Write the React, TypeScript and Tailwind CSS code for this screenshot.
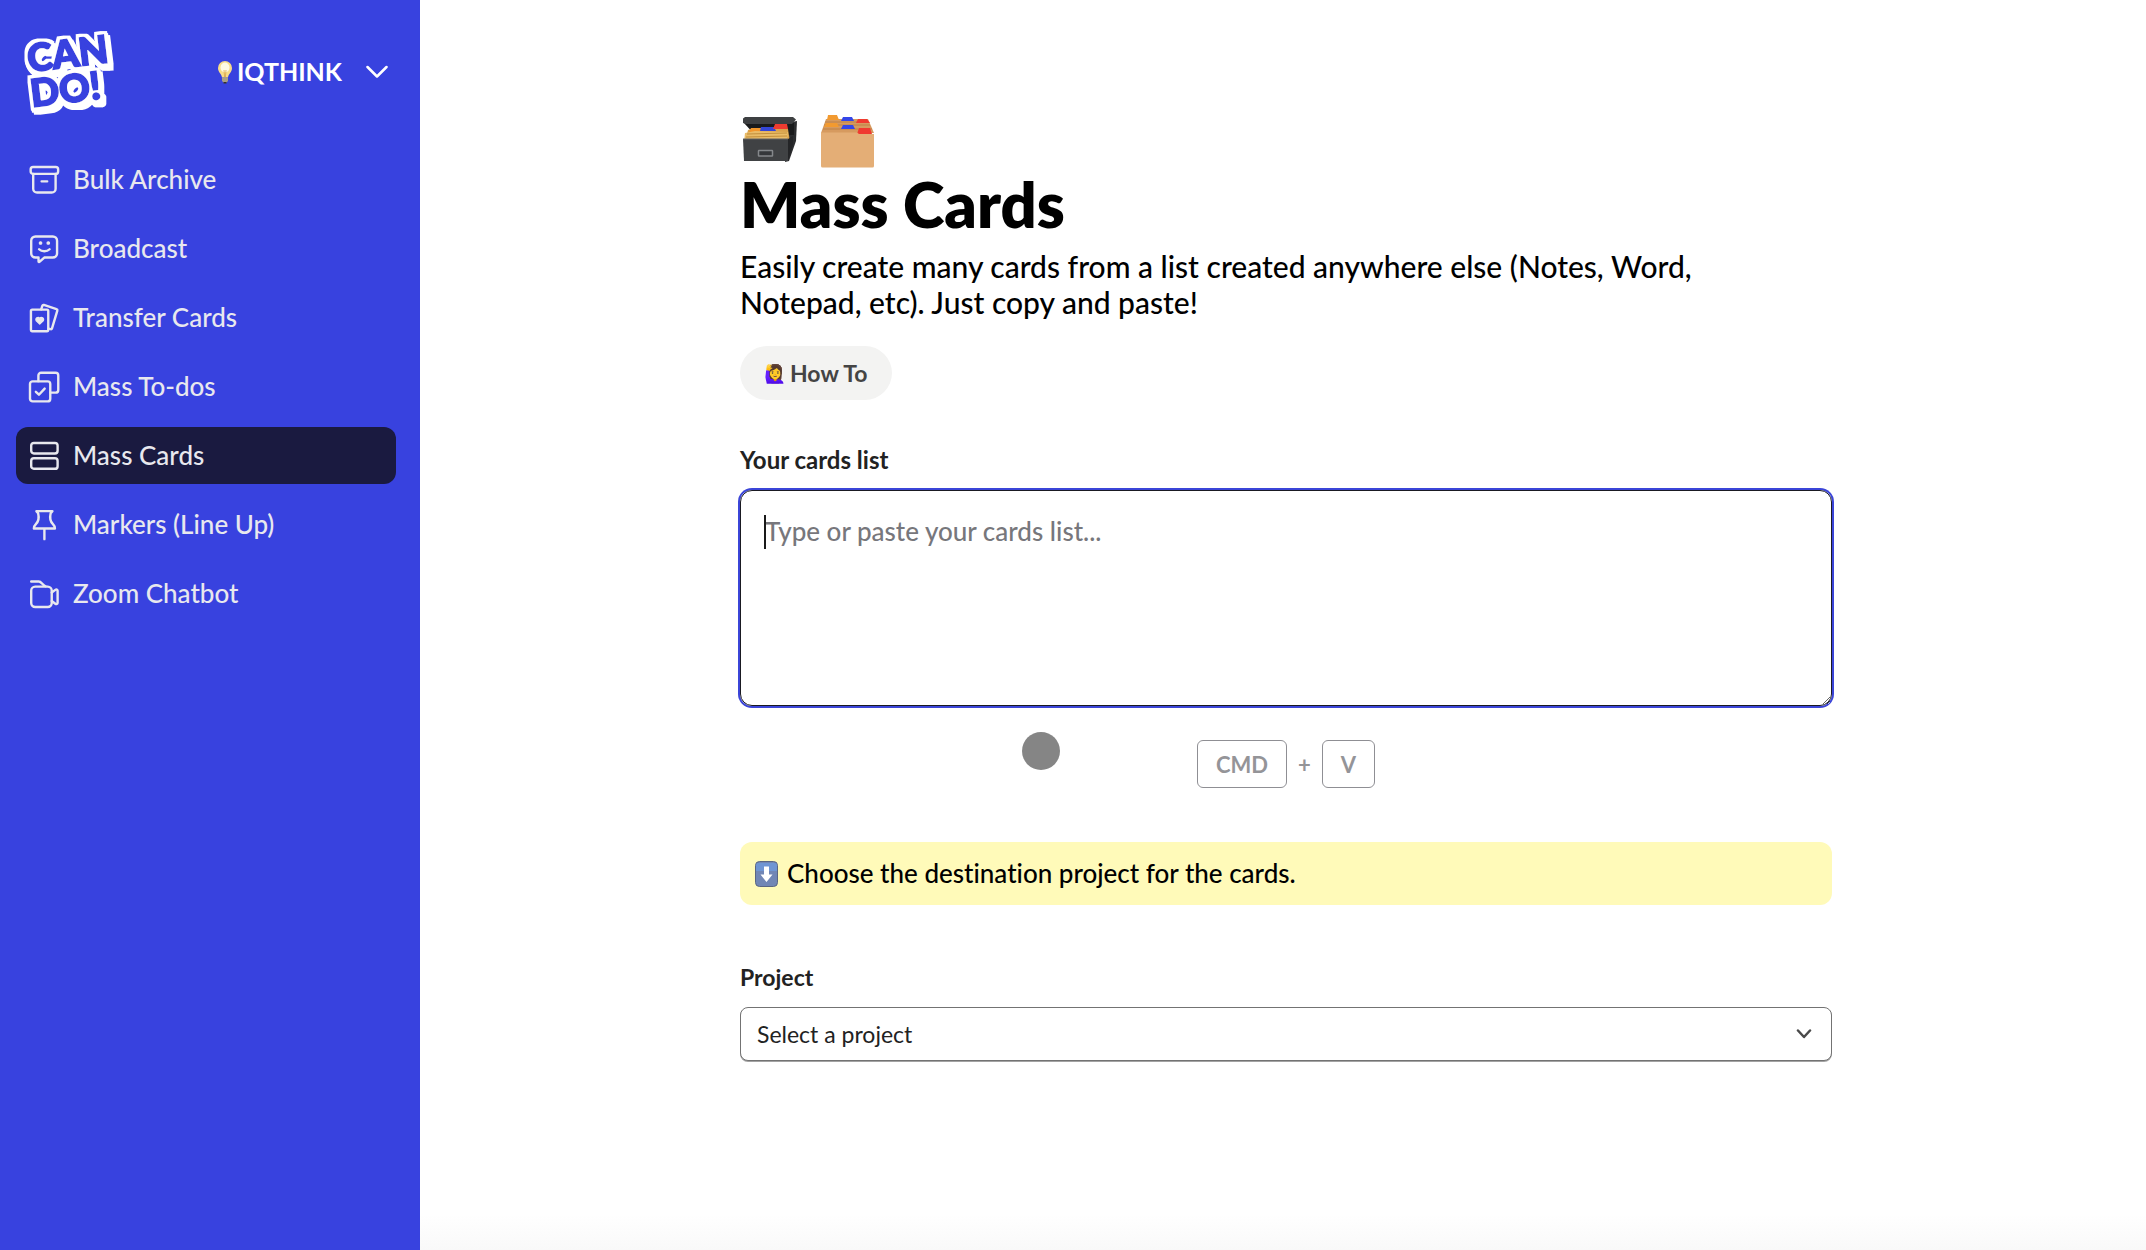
import type { ReactNode } from "react"
import clsx from "clsx"

type NavItem = {
    label: string
    icon: ReactNode
    active?: boolean
}

const navItems: NavItem[] = [
    {
        label: "Bulk Archive",
        icon: (
            <>
                <rect x="2" y="2.2" width="20.6" height="5.2" rx="1.8" />
                <path d="M3.9 7.4v11.1a2.9 2.9 0 0 0 2.9 2.9h11a2.9 2.9 0 0 0 2.9-2.9V7.4M10.2 13h4.2" />
            </>
        )
    },
    {
        label: "Broadcast",
        icon: (
            <>
                <path d="M5.6 2.6h13a3.2 3.2 0 0 1 3.2 3.2v9.4a3.2 3.2 0 0 1-3.2 3.2h-6.4l-3.4 3.1c-.5.4-.9.2-.9-.4v-2.7H5.6a3.2 3.2 0 0 1-3.2-3.2V5.8a3.2 3.2 0 0 1 3.2-3.2z" />
                <path d="M8.3 12.2c2 2 5.9 2 7.9 0" />
                <circle cx="9.4" cy="7.5" r="1" fill="currentColor" strokeWidth="0.8" />
                <circle cx="15.2" cy="7.5" r="1" fill="currentColor" strokeWidth="0.8" />
            </>
        )
    },
    {
        label: "Transfer Cards",
        icon: (
            <>
                <rect x="2.2" y="5.7" width="13" height="16.2" rx="1" />
                <path d="M9.9 5.5l.9-2.7a.9.9 0 0 1 1.1-.6l9.5 3.2a.9.9 0 0 1 .6 1.1l-4 13.3a.9.9 0 0 1-1.1.6l-1.5-.4" />
                <path
                    d="M8.8 16.6l-2.6-2.5a1.5 1.5 0 0 1 2.6-1.8 1.5 1.5 0 0 1 2.6 1.8z"
                    fill="currentColor"
                    strokeWidth="1"
                />
            </>
        )
    },
    {
        label: "Mass To-dos",
        icon: (
            <>
                <rect x="1.5" y="7.8" width="15.2" height="15" rx="2" />
                <path d="M7.8 7.6V3.3a2 2 0 0 1 2-2h10.9a2 2 0 0 1 2 2v10.9a2 2 0 0 1-2 2h-3.8" />
                <path d="M5.9 15.6l2.3 2.2 4.3-4.6" />
            </>
        )
    },
    {
        label: "Mass Cards",
        active: true,
        icon: (
            <>
                <rect x="2.4" y="2.2" width="19.8" height="7.9" rx="2" />
                <rect x="2.4" y="13.7" width="19.8" height="7.9" rx="2" />
            </>
        )
    },
    {
        label: "Markers (Line Up)",
        icon: (
            <path d="M6.3 1.6h12l-1.3 1.6c-.8 3.3-.3 6.2 1.7 8.2 1 1 1.5 2 1.5 3.2H4.400c0-1.200.5-2.200 1.500-3.200 2-2 2.500-4.900 1.700-8.200zM12.300 14.600v8" />
        )
    },
    {
        label: "Zoom Chatbot",
        icon: (
            <>
                <rect x="2.4" y="6.5" width="15.4" height="15.3" rx="3" />
                <path d="M2.4 2.6h5.7c1.9 0 2.6 2.6 5 3.6M17.8 10.9l2.7-2c.8-.6 1.7-.2 1.7.7v9c0 .9-.9 1.3-1.7.7l-2.7-2" />
            </>
        )
    }
]

function Logo() {
    return (
        <a href="#" aria-label="Can Do!">
            <svg width="108" height="96" viewBox="0 0 108 96" className="overflow-visible">
                <defs>
                    <filter id="sticker" x="-20%" y="-20%" width="140%" height="140%">
                        <feMorphology in="SourceAlpha" operator="dilate" radius="2.5" result="near" />
                        <feOffset in="near" dx="1" dy="2" result="mid" />
                        <feOffset in="near" dx="3" dy="4" result="far" />
                        <feMerge result="shape">
                            <feMergeNode in="near" />
                            <feMergeNode in="mid" />
                            <feMergeNode in="far" />
                        </feMerge>
                        <feFlood floodColor="#fff" />
                        <feComposite in2="shape" operator="in" result="outline" />
                        <feMerge>
                            <feMergeNode in="outline" />
                            <feMergeNode in="SourceGraphic" />
                        </feMerge>
                    </filter>
                </defs>
                <g
                    filter="url(#sticker)"
                    className="fill-[#3842df] stroke-[#3842df] font-['Lato',sans-serif] font-black"
                    strokeWidth="2"
                    fontSize="38"
                >
                    <text transform="translate(13 48) rotate(-7)">CAN</text>
                    <text transform="translate(16 83) rotate(-7)">DO!</text>
                </g>
            </svg>
        </a>
    )
}

function BulbIcon() {
    return (
        <svg width="16" height="24" viewBox="0 0 16 24" aria-hidden>
            <path d="M8 1a7 7 0 0 0-7 7c0 4.500 3.600 5.500 4 9.500h6c.4-4 4-5 4-9.500a7 7 0 0 0-7-7z" fill="#f7dc8a" />
            <ellipse cx="8" cy="7.5" rx="4.5" ry="5" fill="#fffbe6" />
            <path d="M7 10l.6 7h.8l.6-7" fill="none" stroke="#d9a646" strokeWidth="0.8" />
            <path d="M5 17.5h6v3.5l-2 2H7l-2-2z" fill="#a89f86" />
            <path d="M6.5 22h3v1.5h-3z" fill="#33312b" />
        </svg>
    )
}

function CardBoxIcon() {
    return (
        <svg width="58" height="52" viewBox="0 0 58 52" aria-hidden>
            <path d="M46 8l10-2-1 20-7 20-4 1z" fill="#2b2c2e" />
            <path d="M3 8h50v12H14z" fill="#191a1b" />
            <path d="M7 15l6-2 34 1 2 13H4z" fill="#d9a34d" />
            <path d="M10 13h10l2 4H8z" fill="#f2962b" />
            <path d="M20 12h13l2 4H19z" fill="#3446d6" />
            <path d="M34 9h12l1 5H32z" fill="#ee3b30" />
            <path d="M4 18l10-2 33 1-1 10H3z" fill="#e9bc68" />
            <path d="M5 22l41-1M6 19l40-1" stroke="#b98330" strokeWidth="0.8" />
            <path d="M2 3.5L4 2h48l3 2.5-4 4.500H5l-3-1z" fill="#3e4042" />
            <path d="M2 24h45v22H3z" fill="#404244" />
            <path d="M47 24l5-3v8l-5 17z" fill="#242527" />
            <path d="M2 24h45" stroke="#606264" />
            <rect x="17.5" y="35.5" width="14" height="5.5" rx="0.5" fill="#35373a" stroke="#85888b" strokeWidth="1.5" />
        </svg>
    )
}

function FolderBoxIcon() {
    return (
        <svg width="58" height="54" viewBox="0 0 58 54" aria-hidden>
            <path d="M2 18L7 4h42l6 14z" fill="#d69a5f" />
            <path d="M6 7h43M5 10h46M4 14h49" stroke="#b97b40" strokeWidth="0.8" />
            <path d="M9 0h9l2 5H8z" fill="#f29a30" />
            <path d="M24 2h9l2 4H22z" fill="#3446e8" />
            <path d="M39 4h9l3 4H37z" fill="#f03a30" />
            <path d="M7 8h11l2 4H5z" fill="#f29a30" />
            <path d="M24 10h10l2 4H22z" fill="#3446e8" />
            <path d="M40 13h11l2 6H38z" fill="#f03a30" />
            <path d="M2 17.5h36l2 1.5h15v32a1.5 1.5 0 0 1-1.500 1.500h-50A1.500 1.500 0 0 1 2 51z" fill="#e4ae76" />
        </svg>
    )
}

function ArrowDownBadge() {
    return (
        <svg width="25" height="26" viewBox="0 0 25 26" aria-hidden>
            <rect x="1.5" y="0.5" width="22" height="25" rx="4" fill="#7186b5" stroke="#5a6683" />
            <path d="M4 2h17a2 2 0 0 1 2 2v6H2V4a2 2 0 0 1 2-2z" fill="#6f9be0" opacity="0.7" />
            <path d="M10 5.5h5v8h3.5l-6 7.500-6-7.500H10z" fill="#fff" />
        </svg>
    )
}

function Sidebar() {
    return (
        <aside className="w-[420px] shrink-0 bg-[#3842df] text-[#e8e8ee]">
            <div className="flex h-36 items-center justify-between pl-4 pr-8">
                <Logo />
                <button type="button" className="flex items-center gap-6 text-white">
                    <span className="flex items-center gap-1 text-[25px] font-bold">
                        <BulbIcon />
                        IQTHINK
                    </span>
                    <svg
                        width="22"
                        height="14"
                        viewBox="0 0 22 14"
                        fill="none"
                        stroke="currentColor"
                        strokeWidth="2.5"
                        strokeLinecap="round"
                        strokeLinejoin="round"
                        aria-hidden
                    >
                        <path d="M1.5 2l9.5 9.5L20.5 2" />
                    </svg>
                </button>
            </div>
            <nav className="flex flex-col gap-3 pt-[7px] pr-6 pl-4">
                {navItems.map((item) => (
                    <a
                        key={item.label}
                        href="#"
                        aria-current={item.active ? "page" : undefined}
                        className={clsx(
                            "flex h-[57px] items-center gap-[13px] rounded-xl px-3 text-[26px] font-medium",
                            item.active && "bg-[#1a1a40]"
                        )}
                    >
                        <svg
                            width="32"
                            height="32"
                            viewBox="0 0 24 24"
                            fill="none"
                            stroke="currentColor"
                            strokeWidth="1.8"
                            strokeLinecap="round"
                            strokeLinejoin="round"
                            aria-hidden
                        >
                            {item.icon}
                        </svg>
                        {item.label}
                    </a>
                ))}
            </nav>
        </aside>
    )
}

function Key({ children }: { children: ReactNode }) {
    return (
        <kbd className="flex h-12 items-center rounded-md border border-[#8f8f94] px-[18px] font-['Lato',sans-serif]">
            {children}
        </kbd>
    )
}

export default function App() {
    return (
        <div className="flex min-h-screen bg-white font-['Lato','Noto_Sans',sans-serif] text-black [font-variant-ligatures:no-common-ligatures]">
            <Sidebar />
            <main className="flex min-w-0 flex-1 flex-col">
                <div className="mx-auto w-full max-w-[1098px] pt-28 pl-1.5">
                    <div className="flex h-[60px] items-start gap-5 pt-[3px] pl-px">
                        <CardBoxIcon />
                        <FolderBoxIcon />
                    </div>
                    <h1 className="text-[63px] leading-[64px] font-extrabold">Mass Cards</h1>
                    <p className="mt-3 max-w-[990px] text-[30px] leading-9 font-medium">
                        Easily create many cards from a list created anywhere else (Notes, Word, Notepad, etc). Just
                        copy and paste!
                    </p>
                    <button
                        type="button"
                        className="mt-[26px] flex h-[54px] items-center gap-1 rounded-full bg-[#f3f3f2] px-6 text-[23px] font-bold text-[#444]"
                    >
                        <span className="text-[18px]">🙋‍♀️</span>
                        How To
                    </button>

                    <label htmlFor="cards" className="mt-11 block text-[24px] leading-8 font-bold text-[#222]">
                        Your cards list
                    </label>
                    <div className="relative mt-3.5 flex">
                        <textarea
                            id="cards"
                            placeholder="Type or paste your cards list..."
                            className="h-[216px] w-full rounded-xl border border-[#1a1a22] px-6 py-6 text-[26px] leading-8 font-medium ring-2 ring-[#3b45d8] outline-none placeholder:text-[#77777c]"
                        />
                        <span className="absolute top-[25px] left-6 h-[34px] w-0.5 bg-[#1a1a1a]" />
                    </div>

                    <div className="relative mt-[34px] flex items-center justify-center gap-[11px] text-[22px] font-bold text-[#949498]">
                        <Key>CMD</Key>
                        <span>+</span>
                        <Key>V</Key>
                        {/* pointer */}
                        <span className="absolute -top-2 left-[282px] size-[38px] rounded-full bg-[#858585]" />
                    </div>

                    <p className="mt-[54px] flex h-[63px] items-center gap-2 rounded-xl bg-[#fffab9] px-3.5 text-[26px] font-medium">
                        <ArrowDownBadge />
                        Choose the destination project for the cards.
                    </p>

                    <label htmlFor="project" className="mt-14 block text-[23px] leading-8 font-bold text-[#222]">
                        Project
                    </label>
                    <div className="relative mt-3.5">
                        <select
                            id="project"
                            className="h-[54px] w-full appearance-none rounded-lg border border-[#737373] bg-white px-4 text-[23px] text-[#222] shadow-[0_1px_0_#a3a3a3]"
                        >
                            <option>Select a project</option>
                        </select>
                        <svg
                            width="16"
                            height="10"
                            viewBox="0 0 16 10"
                            fill="none"
                            stroke="#4a4a4a"
                            strokeWidth="2.5"
                            strokeLinecap="round"
                            strokeLinejoin="round"
                            className="pointer-events-none absolute top-[22px] right-5"
                            aria-hidden
                        >
                            <path d="M2 1.5l6 6.5 6-6.500" />
                        </svg>
                    </div>
                </div>
                <div className="mt-auto h-9 bg-linear-to-b from-white to-[#f9f9f9]" />
            </main>
        </div>
    )
}
